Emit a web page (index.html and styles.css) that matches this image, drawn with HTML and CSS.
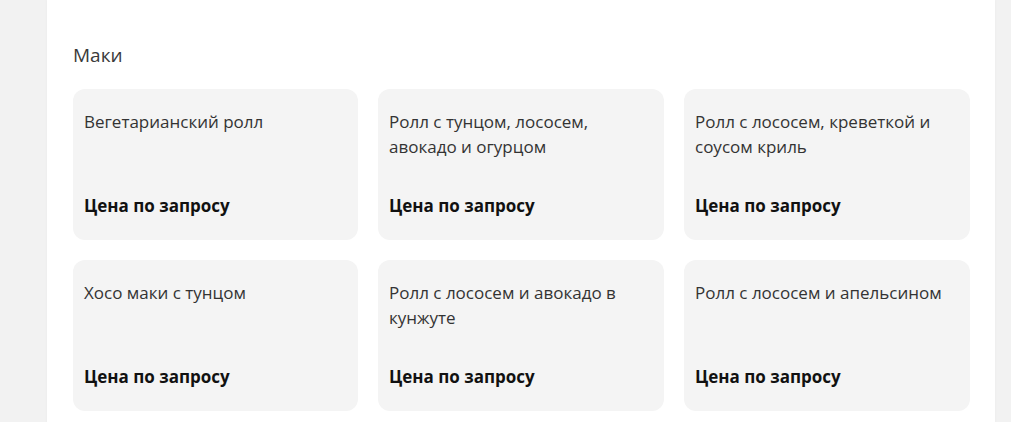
FILE: index.html
```html
<!DOCTYPE html>
<html lang="ru">
<head>
<meta charset="utf-8">
<title>Маки</title>
<link rel="stylesheet" href="styles.css">
</head>
<body>
<main class="panel">
  <h2 class="section-title">Маки</h2>
  <div class="grid">
    <div class="card"><div class="name">Вегетарианский ролл</div><div class="price">Цена по запросу</div></div>
    <div class="card"><div class="name">Ролл с тунцом, лососем, авокадо и огурцом</div><div class="price">Цена по запросу</div></div>
    <div class="card"><div class="name">Ролл с лососем, креветкой и соусом криль</div><div class="price">Цена по запросу</div></div>
    <div class="card"><div class="name">Хосо маки с тунцом</div><div class="price">Цена по запросу</div></div>
    <div class="card"><div class="name">Ролл с лососем и авокадо в кунжуте</div><div class="price">Цена по запросу</div></div>
    <div class="card"><div class="name">Ролл с лососем и апельсином</div><div class="price">Цена по запросу</div></div>
  </div>
</main>
</body>
</html>
```
FILE: styles.css
```css
html, body {
  margin: 0;
  padding: 0;
  height: 100%;
}
body {
  background: #f2f2f2;
  font-family: "Open Sans", "Noto Sans", "Liberation Sans", sans-serif;
  overflow: hidden;
}
.panel {
  margin-left: 47px;
  width: 948px;
  min-height: 100%;
  box-sizing: border-box;
  background: #fff;
  padding: 41px 25px 26px 26px;
  box-shadow: 0 0 3px rgba(0,0,0,0.04);
}
.section-title {
  margin: 0 0 19px 0;
  font-size: 19px;
  line-height: 29px;
  font-weight: 400;
  color: #3a3a3a;
}
.grid {
  display: grid;
  grid-template-columns: 285px 286px 286px;
  gap: 20px;
}
.card {
  background: #f4f4f4;
  border-radius: 12px;
  height: 151px;
  box-sizing: border-box;
  padding: 20px 11px 22px 11px;
  display: flex;
  flex-direction: column;
  justify-content: space-between;
}
.name {
  font-size: 17px;
  line-height: 25px;
  color: #333;
}
.price {
  font-size: 17px;
  line-height: 25px;
  font-weight: 700;
  color: #111;
}
```
